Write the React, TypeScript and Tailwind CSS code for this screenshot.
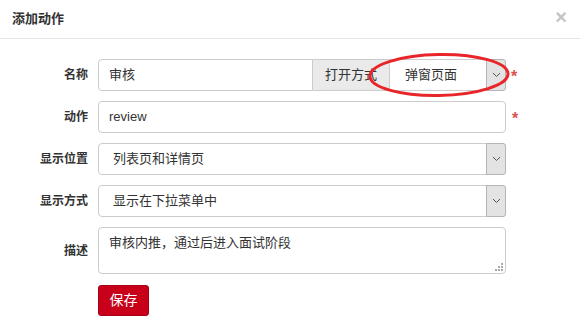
import React from "react";

const font = { fontFamily: '"Liberation Sans", "Noto Sans CJK SC", sans-serif' };

function Arrow() {
  return (
    <div className="w-[18px] h-full bg-[#e3e3e3] border border-[#b5b5b5] flex items-center justify-center rounded-r-[3px] -mr-px -my-px box-content">
      <svg width="9" height="6" viewBox="0 0 9 6">
        <path d="M1 1 L4.5 4.5 L8 1" fill="none" stroke="#555" strokeWidth="1" />
      </svg>
    </div>
  );
}

function Label({ children }: { children: React.ReactNode }) {
  return (
    <div className="w-[98px] shrink-0 pr-[10px] text-right text-[12px] font-bold text-[#333]">
      {children}
    </div>
  );
}

export default function App() {
  return (
    <div className="w-[580px] h-[334px] bg-white relative overflow-hidden" style={font}>
      <div className="h-[39px] border-b border-[#e5e5e5] flex items-center justify-between px-[12px]">
        <div className="text-[13px] font-bold text-[#333]">添加动作</div>
        <div className="text-[20px] font-bold text-[#c4c4c4] leading-none mr-[1px] -mt-[4px]">×</div>
      </div>
      <div className="pt-[20px]">
        {/* Row 1 */}
        <div className="flex items-center h-[32px] mb-[10px]">
          <Label>名称</Label>
          <div className="flex w-[408px] h-full">
            <div className="w-[215px] h-full border border-[#ccc] rounded-l-[4px] flex items-center pl-[10px] text-[13px] text-[#333]">
              审核
            </div>
            <div className="w-[76px] h-full border-y border-[#ccc] bg-[#eaeaea] flex items-center justify-center text-[13px] text-[#333]">
              打开方式
            </div>
            <div className="flex-1 h-full border border-[#ccc] rounded-r-[4px] flex items-center justify-between">
              <span className="pl-[15px] text-[13px] text-[#333]">弹窗页面</span>
              <Arrow />
            </div>
          </div>
          <span className="ml-[5px] mt-[4px] text-[#d9534f] text-[16px] font-bold">*</span>
        </div>
        {/* Row 2 */}
        <div className="flex items-center h-[32px] mb-[10px]">
          <Label>动作</Label>
          <div className="w-[408px] h-full border border-[#ccc] rounded-[4px] flex items-center pl-[10px] text-[13px] text-[#333]">
            review
          </div>
          <span className="ml-[6px] mt-[4px] text-[#d9534f] text-[16px] font-bold">*</span>
        </div>
        {/* Row 3 */}
        <div className="flex items-center h-[32px] mb-[10px]">
          <Label>显示位置</Label>
          <div className="w-[408px] h-full border border-[#ccc] rounded-[4px] flex items-center justify-between">
            <span className="pl-[14px] text-[13px] text-[#333]">列表页和详情页</span>
            <Arrow />
          </div>
        </div>
        {/* Row 4 */}
        <div className="flex items-center h-[32px] mb-[10px]">
          <Label>显示方式</Label>
          <div className="w-[408px] h-full border border-[#ccc] rounded-[4px] flex items-center justify-between">
            <span className="pl-[14px] text-[13px] text-[#333]">显示在下拉菜单中</span>
            <Arrow />
          </div>
        </div>
        {/* Row 5 */}
        <div className="flex items-center h-[47px] mb-[11px]">
          <Label>描述</Label>
          <div className="relative w-[408px] h-full border border-[#ccc] rounded-[4px] pl-[10px] pt-[5px] text-[13px] text-[#333]">
            审核内推，通过后进入面试阶段
            <svg className="absolute right-[2px] bottom-[2px]" width="8" height="8" viewBox="0 0 8 8">
              <rect x="6" y="0" width="2" height="2" fill="#aaa" />
              <rect x="3" y="3" width="2" height="2" fill="#aaa" />
              <rect x="6" y="3" width="2" height="2" fill="#aaa" />
              <rect x="0" y="6" width="2" height="2" fill="#aaa" />
              <rect x="3" y="6" width="2" height="2" fill="#aaa" />
              <rect x="6" y="6" width="2" height="2" fill="#aaa" />
            </svg>
          </div>
        </div>
        {/* Button */}
        <div className="flex">
          <div className="w-[98px]" />
          <div className="w-[51px] h-[31px] bg-[#c9001a] border border-[#a80016] rounded-[3px] flex items-center justify-center text-white text-[14px]">
            保存
          </div>
        </div>
      </div>
      {/* annotation ellipse */}
      <svg className="absolute left-0 top-0 pointer-events-none" width="580" height="334">
        <ellipse cx="439" cy="75" rx="69" ry="20.5" fill="none" stroke="#e8262a" strokeWidth="3" transform="rotate(-1 439 75)" />
      </svg>
    </div>
  );
}
